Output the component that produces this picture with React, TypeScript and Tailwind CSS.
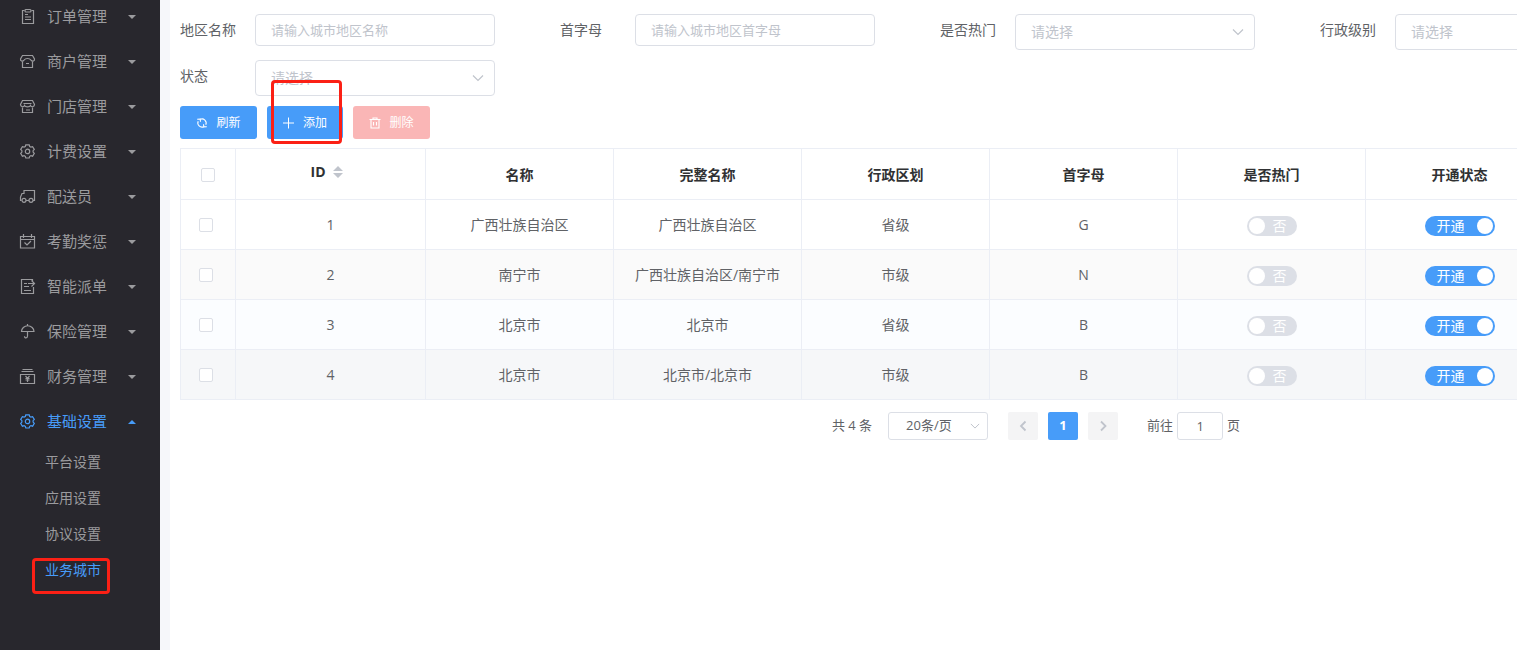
import { useState } from 'react';
import type { ReactNode } from 'react';

const iconPaths: Record<string, ReactNode> = {
  order: (
    <>
      <path d="M5.5 2.5h-2v13h11v-13h-2" />
      <rect x="6" y="1.5" width="6" height="2.500" rx="1" />
      <path d="M6 6.500h3M6 9h6M6 11.500h6" />
    </>
  ),
  merchant: (
    <>
      <path d="M3.500 2.500h10L15.500 6c.2 2-2 3-3.500 1.200C11 5.800 10 5.500 8.500 5.500S6 5.800 5 7.200C3.500 9 1.300 8 1.500 6z" />
      <path d="M3.500 8.500v6h10v-6M7 10.500h3" />
    </>
  ),
  store: (
    <>
      <path d="M3.500 2.500h10l2 4c0 2.500-3 3-4 1-.8 1.800-5.200 1.800-6 0-1 2-4 1.500-4-1z" />
      <path d="M3.500 9.500v5h10v-5M4.500 5.500h8M7 12h4" />
    </>
  ),
  setting: (
    <>
      <path d="M6.800 1.800h3.400l.5 1.700 1.200.6 1.700-.5 1.700 2.900-1.200 1.200v1.400l1.200 1.200-1.700 2.900-1.700-.5-1.200.6-.5 1.700H6.800l-.5-1.700-1.200-.6-1.700.5-1.700-2.900 1.200-1.200V7.700L1.700 6.500l1.700-2.900 1.700.5 1.200-.6z" />
      <circle cx="8.500" cy="8.400" r="2.200" />
    </>
  ),
  rider: (
    <>
      <path d="M2.500 12.500h-1V9l1.500-3.500h2v-3h10.500v10H14M7 12.500h3" />
      <circle cx="5" cy="12.300" r="2" />
      <circle cx="12" cy="12.300" r="2" />
    </>
  ),
  attendance: (
    <>
      <path d="M1.500 3.500h14v11.500h-14zM1.500 6.500h14M4.500 1v4M12.500 1v4" />
      <path d="M5.500 9.500L8 12l4-4" />
    </>
  ),
  dispatch: (
    <>
      <path d="M13.500 3v-1.500h-11v14h12V9M5 5.500h3M5 8.500h5M5 12.500h7" />
      <path d="M9 5.500h6.500M12.500 2.500l3 3-3 3" />
    </>
  ),
  insurance: <path d="M2.500 8.500a6.200 5.700 0 0 1 12.500 0zM8.500 1v2M8.500 8.500v4.500c0 2.500-3 2.500-3 .3" />,
  finance: (
    <>
      <path d="M3.500 1.500h10M2.500 3.500h12M1.500 6.500h14v9h-14z" />
      <path d="M6.500 8l2 2.300 2-2.300M8.500 10.300V14M6.500 10.500h4M6.500 12h4" />
    </>
  ),
};

const menu = [
  { icon: 'order', label: '订单管理' },
  { icon: 'merchant', label: '商户管理' },
  { icon: 'store', label: '门店管理' },
  { icon: 'setting', label: '计费设置' },
  { icon: 'rider', label: '配送员' },
  { icon: 'attendance', label: '考勤奖惩' },
  { icon: 'dispatch', label: '智能派单' },
  { icon: 'insurance', label: '保险管理' },
  { icon: 'finance', label: '财务管理' },
  { icon: 'setting', label: '基础设置', open: true },
];

const subMenu = ['平台设置', '应用设置', '协议设置', '业务城市'];

const rows = [
  { id: 1, name: '广西壮族自治区', fullName: '广西壮族自治区', level: '省级', letter: 'G', bg: 'bg-white' },
  { id: 2, name: '南宁市', fullName: '广西壮族自治区/南宁市', level: '市级', letter: 'N', bg: 'bg-[#fafafa]' },
  { id: 3, name: '北京市', fullName: '北京市', level: '省级', letter: 'B', bg: 'bg-[#fbfdff]' },
  { id: 4, name: '北京市', fullName: '北京市/北京市', level: '市级', letter: 'B', bg: 'bg-[#f6f7f9]' },
];

const headers = ['名称', '完整名称', '行政区划', '首字母', '是否热门', '开通状态'];

const MenuIcon = ({ name }: { name: string }) => (
  <svg
    className="size-[15px] shrink-0 overflow-visible"
    viewBox="1 1 15 15"
    fill="none"
    stroke="currentColor"
    strokeWidth="1.200"
  >
    {iconPaths[name]}
  </svg>
);

const Chevron = ({ className }: { className: string }) => (
  <svg className={className} viewBox="0 0 12 12" fill="none" stroke="currentColor" strokeWidth="1.200">
    <path d="M1 3.500l5 5 5-5" />
  </svg>
);

const Sidebar = () => (
  <nav className="w-40 shrink-0 overflow-hidden bg-[#28272d] text-[#9b9b9e]">
    <ul className="-mt-1.5">
      {menu.map((item) => (
        <li key={item.label}>
          <button
            className={`flex h-[45px] w-full items-center pl-5 pr-6 text-[15px] ${item.open ? 'text-[#479cf9]' : ''}`}
          >
            <MenuIcon name={item.icon} />
            <span className="ml-3 flex-1 text-left">{item.label}</span>
            <svg className="h-1 w-2" viewBox="0 0 8 4" fill="currentColor">
              <path d={item.open ? 'M0 4l4-4 4 4z' : 'M0 0l4 4 4-4z'} />
            </svg>
          </button>
          {item.open && (
            <ul>
              {subMenu.map((label) => (
                <li key={label} className="relative">
                  <a
                    href="#"
                    className={`flex h-9 items-center pl-[45px] text-sm ${label === '业务城市' ? 'text-[#479cf9]' : ''}`}
                  >
                    {label}
                  </a>
                  {label === '业务城市' && (
                    <span className="pointer-events-none absolute left-8 top-1.5 h-9 w-[78px] rounded-sm border-3 border-[#fb2015]" />
                  )}
                </li>
              ))}
            </ul>
          )}
        </li>
      ))}
    </ul>
  </nav>
);

const Field = ({ id, label, children }: { id: string; label: string; children: ReactNode }) => (
  <div className="mr-[65px] flex h-9 w-[315px] items-start">
    <label htmlFor={id} className="w-[75px] text-sm leading-8 text-[#606266]">
      {label}
    </label>
    <div className="relative flex-1">{children}</div>
  </div>
);

const TextField = ({ id, label, placeholder }: { id: string; label: string; placeholder: string }) => (
  <Field id={id} label={label}>
    <input
      id={id}
      placeholder={placeholder}
      className="block h-8 w-full rounded border border-[#dcdfe6] bg-white px-[15px] text-[13px] text-[#606266] placeholder:text-[#c0c4cc]"
    />
  </Field>
);

const SelectField = ({ id, label }: { id: string; label: string }) => (
  <Field id={id} label={label}>
    <select
      id={id}
      className="block h-9 w-full appearance-none rounded border border-[#dcdfe6] bg-white px-[15px] text-sm text-[#c0c4cc]"
    >
      <option>请选择</option>
    </select>
    <Chevron className="pointer-events-none absolute right-[11px] top-3 size-3 text-[#c0c4cc]" />
  </Field>
);

const Checkbox = ({ label }: { label: string }) => (
  <input
    type="checkbox"
    aria-label={label}
    className="block size-3.5 appearance-none rounded-xs border border-[#dcdfe6] bg-white checked:border-[#479cf9] checked:bg-[#479cf9]"
  />
);

const Switch = ({ label, initial, on, off }: { label: string; initial: boolean; on: string; off: string }) => {
  const [checked, setChecked] = useState(initial);
  return (
    <button
      role="switch"
      aria-label={label}
      aria-checked={checked}
      onClick={() => setChecked(!checked)}
      className={`mx-auto mt-0.5 flex h-5 items-center rounded-full text-sm leading-5 text-white ${
        checked ? 'w-[70px] flex-row-reverse justify-between bg-[#479cf9] pl-3 pr-0.5' : 'w-[50px] gap-2 bg-[#dcdfe6] pl-0.5'
      }`}
    >
      <span className="size-4 rounded-full bg-white" />
      <span>{checked ? on : off}</span>
    </button>
  );
};

const Toolbar = () => (
  <div className="flex gap-2.5 text-xs text-white">
    <button className="flex h-[33px] w-[77px] items-center justify-center gap-2 rounded-[3px] bg-[#479cf9]">
      <svg className="size-3" viewBox="0 0 12 12" fill="none" stroke="currentColor" strokeWidth="1.100">
        <path d="M4.200 2.300A4.200 4.200 0 0 1 9.800 7.800M7.800 9.700A4.200 4.200 0 0 1 2.200 4.200" />
        <path d="M1.200 2.200l3-.1.300 2.700M10.800 9.800l-3 .1-.3-2.700" />
      </svg>
      刷新
    </button>
    <div className="relative">
      <button className="flex h-[33px] w-[76px] items-center justify-center gap-2 rounded-[3px] bg-[#479cf9]">
        <svg className="size-3" viewBox="0 0 12 12" fill="none" stroke="currentColor" strokeWidth="1">
          <path d="M5.500 .5v11M0 6h11" />
        </svg>
        添加
      </button>
      <span className="pointer-events-none absolute -top-[26px] left-1 h-16 w-[71px] rounded-sm border-3 border-[#fb2015]" />
    </div>
    <button disabled className="flex h-[33px] w-[77px] items-center justify-center gap-2 rounded-[3px] bg-[#fab6b6]">
      <svg className="size-3" viewBox="0 0 12 12" fill="none" stroke="currentColor" strokeWidth="1.100">
        <path d="M.5 2.500h11M4 2.500v-1.500h4v1.500M2 2.500v8.500h8v-8.500M4.500 5v3.500M7.500 5v3.500" />
      </svg>
      删除
    </button>
  </div>
);

const cell = 'border-b border-r border-[#ebeef5]';

const CityTable = () => (
  <table className="mt-[9px] w-full table-fixed border-separate border-spacing-0 border-l border-t border-[#ebeef5] text-center text-sm text-[#606266]">
    <colgroup>
      <col className="w-[55px]" />
      <col className="w-[190px]" />
      {headers.map((h) => (
        <col key={h} className="w-[188px]" />
      ))}
      <col />
    </colgroup>
    <thead>
      <tr className="h-[51px] text-[#303133]">
        <th className={`${cell} pl-5 pt-0.5`}>
          <Checkbox label="全选" />
        </th>
        <th className={`${cell} pb-1 pr-2`}>
          <button className="inline-flex items-center gap-[7px] font-bold">
            ID
            <svg className="h-3 w-2.5 text-[#c0c4cc]" viewBox="0 0 10 12" fill="currentColor">
              <path d="M0 5l5-5 5 5zM0 7l5 5 5-5z" />
            </svg>
          </button>
        </th>
        {headers.map((h) => (
          <th key={h} className={`${cell} pt-0.5 font-bold`}>
            {h}
          </th>
        ))}
        <td className={cell} />
      </tr>
    </thead>
    <tbody>
      {rows.map((row) => (
        <tr key={row.id} className={`h-[50px] ${row.bg}`}>
          <td className={`${cell} pl-[18px]`}>
            <Checkbox label={`选择 ${row.id}`} />
          </td>
          <td className={cell}>{row.id}</td>
          <td className={cell}>{row.name}</td>
          <td className={cell}>{row.fullName}</td>
          <td className={cell}>{row.level}</td>
          <td className={cell}>{row.letter}</td>
          <td className={cell}>
            <Switch label="是否热门" initial={false} on="是" off="否" />
          </td>
          <td className={cell}>
            <Switch label="开通状态" initial on="开通" off="关闭" />
          </td>
          <td className={cell} />
        </tr>
      ))}
    </tbody>
  </table>
);

const Pagination = () => (
  <div className="mt-3 flex h-7 items-center justify-center text-[13px] text-[#606266]">
    <span>共 4 条</span>
    <div className="relative ml-4">
      <select
        aria-label="每页条数"
        className="block h-7 w-[100px] appearance-none rounded-[3px] border border-[#dcdfe6] bg-white pl-[17px]"
      >
        <option>20条/页</option>
      </select>
      <Chevron className="pointer-events-none absolute right-2 top-[9px] size-2.5 text-[#c0c4cc]" />
    </div>
    <div className="ml-5 flex gap-2.5">
      <button disabled aria-label="上一页" className="flex h-7 w-[30px] items-center justify-center rounded-xs bg-[#f4f4f5]">
        <svg className="size-3 text-[#c0c4cc]" viewBox="0 0 12 12" fill="none" stroke="currentColor" strokeWidth="1.800">
          <path d="M8.500 1.500L4 6l4.500 4.500" />
        </svg>
      </button>
      <button className="h-7 w-[30px] rounded-xs bg-[#479cf9] font-bold text-white">1</button>
      <button disabled aria-label="下一页" className="flex h-7 w-[30px] items-center justify-center rounded-xs bg-[#f4f4f5]">
        <svg className="size-3 text-[#c0c4cc]" viewBox="0 0 12 12" fill="none" stroke="currentColor" strokeWidth="1.800">
          <path d="M4 1.500L8.500 6 4 10.500" />
        </svg>
      </button>
    </div>
    <label className="ml-[29px] flex items-center gap-1">
      前往
      <input defaultValue="1" className="h-7 w-[46px] rounded-[3px] border border-[#dcdfe6] text-center" />
      页
    </label>
  </div>
);

export default function App() {
  return (
    <div className="flex h-screen overflow-hidden bg-white font-['Open_Sans','Noto_Sans_CJK_SC',sans-serif]">
      <Sidebar />
      <main className="flex-1 overflow-hidden border-l-10 border-[#f6f7fa]">
        <div className="min-w-[1732px] px-2.5 pt-3.5">
          <div className="flex flex-wrap gap-y-2.5">
            <TextField id="name" label="地区名称" placeholder="请输入城市地区名称" />
            <TextField id="letter" label="首字母" placeholder="请输入城市地区首字母" />
            <SelectField id="hot" label="是否热门" />
            <SelectField id="level" label="行政级别" />
            <SelectField id="status" label="状态" />
          </div>
          <div className="mt-2.5">
            <Toolbar />
          </div>
          <CityTable />
          <Pagination />
        </div>
      </main>
    </div>
  );
}
